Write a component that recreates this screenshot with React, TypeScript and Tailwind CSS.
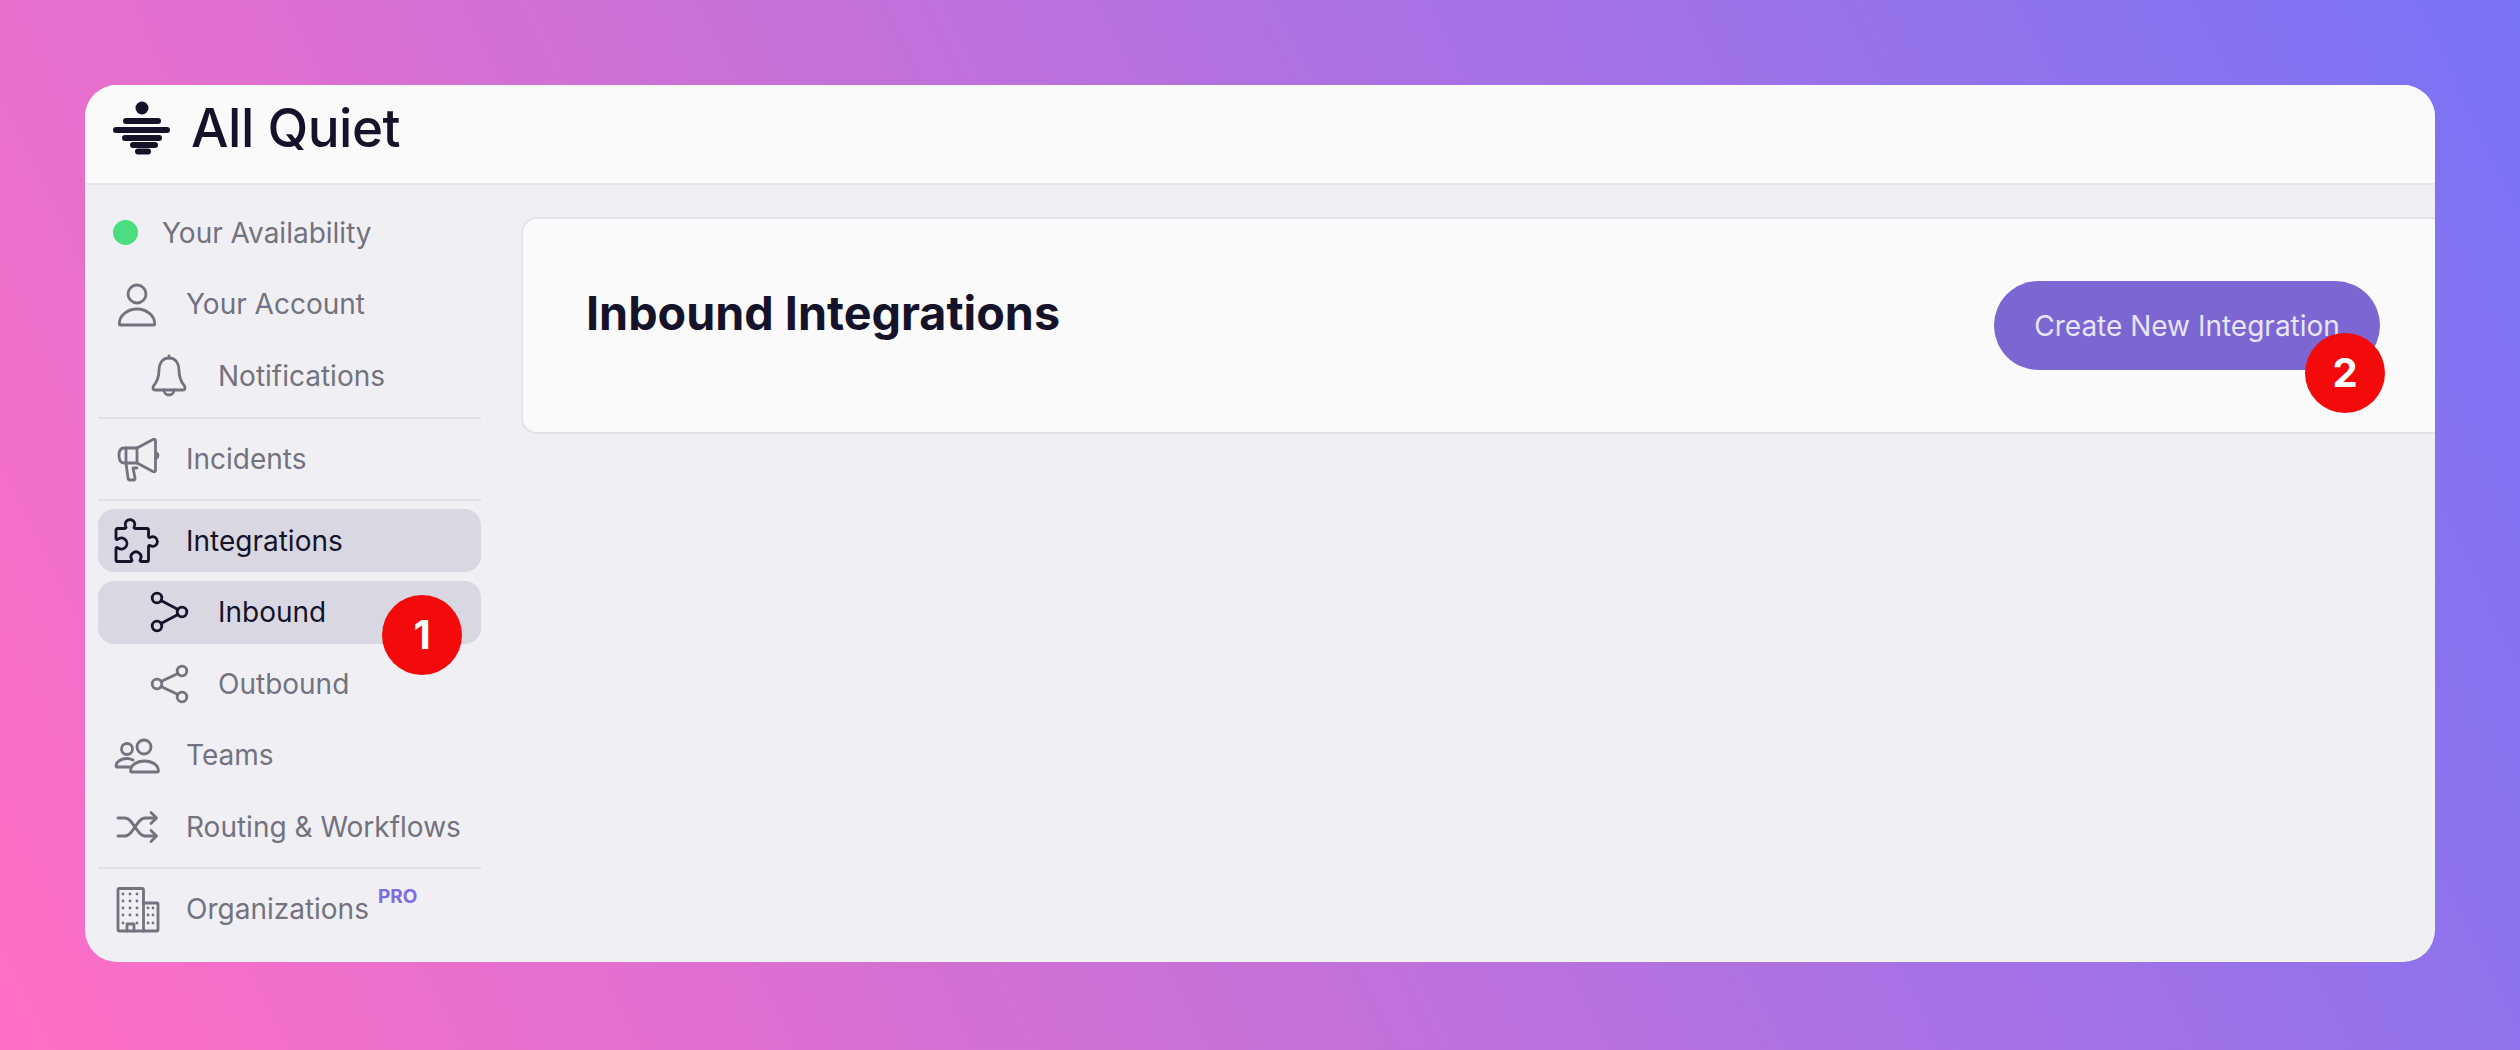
import type { ReactNode } from "react";

const Stroke = ({ children, size = 48 }: { children: ReactNode; size?: number }) => (
  <svg
    width={size}
    height={size}
    viewBox="0 0 48 48"
    fill="none"
    stroke="currentColor"
    strokeWidth="2.8"
    strokeLinecap="round"
    strokeLinejoin="round"
    className="shrink-0"
  >
    {children}
  </svg>
);

const UserIcon = () => (
  <Stroke>
    <circle cx="24" cy="14" r="9" />
    <path d="M7.5 45H40.5a1.2 1.2 0 0 0 1.2-1.2C41.7 35 33 29 24 29S6.3 35 6.3 43.8A1.2 1.2 0 0 0 7.5 45Z" />
  </Stroke>
);

const BellIcon = () => (
  <Stroke>
    <path d="M24 6C17 6 14 12 14 18C14 26 12 30 8.5 34C7.5 36 8 38 10 38H38C40 38 40.5 36 39.5 34C36 30 34 26 34 18C34 12 31 6 24 6Z" />
    <path d="M19 38a5 5 0 0 0 10 0M24 4v2" />
  </Stroke>
);

const MegaphoneIcon = () => (
  <Stroke>
    <path d="M11 13H24L40 4.5C41.5 3.8 42.5 4.5 42.5 6V35C42.5 36.5 41.5 37.2 40 36.5L24 28H11C8 28 6 26 6 20.5S8 13 11 13Z" />
    <path d="M13 13V28M24 13V28M13 28L15 43C15.2 44.3 16 45 17 45H20.5C21.8 45 22.3 44 22 43L20 33H24M43.5 18C45.5 19 45.5 22 43.5 23" />
  </Stroke>
);

const PuzzleIcon = () => (
  <Stroke>
    <path d="M3 13a1.5 1.5 0 0 1 1.5-1.5H11.5c1.5 0 2-1 1.2-2a4.8 4.8 0 1 1 8.6 0c-.8 1-.3 2 1.2 2H34a1.5 1.5 0 0 1 1.5 1.5V19c0 1.5 1 2 2 1.2a4.8 4.8 0 1 1 0 8.6c-1-.8-2-.3-2 1.2V43a1.5 1.5 0 0 1-1.5 1.5H28.5c-1.5 0-2-1-1.2-2a5 5 0 1 0-8.6 0c.8 1 .3 2-1.2 2H4.5A1.5 1.5 0 0 1 3 43V32c0-1.5 1-2 2-1.2a5.5 5.5 0 1 0 0-8.6c-1 .8-2 .3-2-1.2V13Z" />
  </Stroke>
);

const InboundIcon = () => (
  <Stroke>
    <circle cx="12" cy="10" r="4.8" />
    <circle cx="37" cy="24" r="4.8" />
    <circle cx="12" cy="38" r="4.8" />
    <path d="M16 12.5L33 21.5M16 35.5L33 26.5" />
  </Stroke>
);

const OutboundIcon = () => (
  <Stroke>
    <circle cx="37" cy="11" r="4.8" />
    <circle cx="12" cy="24" r="4.8" />
    <circle cx="37" cy="37" r="4.8" />
    <path d="M33 13.5L16 21.5M33 34.5L16 26.5" />
  </Stroke>
);

const TeamsIcon = () => (
  <Stroke>
    <circle cx="31" cy="16" r="7" />
    <circle cx="14" cy="18" r="5.5" />
    <path d="M18.5 41H44.5a1 1 0 0 0 1-1C45.5 34 39 30 31.5 30S17.5 34 17.5 40a1 1 0 0 0 1 1Z" />
    <path d="M17 36H4a1 1 0 0 1-1-1C3 31 8 27.5 14 27.5C16 27.5 18 28 20 29" />
  </Stroke>
);

const ShuffleIcon = () => (
  <Stroke>
    <path d="M5 15H12C20 15 24 33 32 33H43M5 33H12C20 33 24 15 32 15H43" />
    <path d="M38 9.5L43.5 15L38 20.5M38 27.5L43.5 33L38 38.5" />
  </Stroke>
);

const dots = [
  [10, 9], [17, 9], [24, 9],
  [10, 16], [17, 16], [24, 16],
  [10, 23], [17, 23], [24, 23],
  [10, 30], [17, 30], [24, 30],
  [10, 38], [24, 38],
  [35, 23], [40, 23],
  [35, 30], [40, 30],
  [35, 38], [40, 38],
];

const BuildingIcon = () => (
  <Stroke>
    <path d="M5 45V5a1.5 1.5 0 0 1 1.5-1.5H29a1.5 1.5 0 0 1 1.5 1.5V46H6.5A1.5 1.5 0 0 1 5 45Z" />
    <path d="M30.5 18H44a1 1 0 0 1 1 1V45a1 1 0 0 1-1 1H30.5M14 46V39H21V46" />
    {dots.map(([cx, cy]) => (
      <circle key={`${cx}-${cy}`} cx={cx} cy={cy} r="1.4" fill="currentColor" stroke="none" />
    ))}
  </Stroke>
);

const Divider = ({ className }: { className?: string }) => (
  <div className={`h-[2px] bg-[#e1e0e7] ${className ?? ""}`} />
);

const Badge = ({ n, className }: { n: number; className: string }) => (
  <span
    className={`absolute flex h-[80px] w-[80px] items-center justify-center rounded-full bg-[#f30b0b] text-[40px] font-bold text-white ${className}`}
  >
    {n}
  </span>
);

const NavItem = ({
  icon,
  label,
  sub,
  active,
  children,
}: {
  icon: ReactNode;
  label: string;
  sub?: boolean;
  active?: boolean;
  children?: ReactNode;
}) => (
  <div
    className={`relative flex h-[63px] items-center gap-[25px] rounded-[16px] ${sub ? "pl-[47px]" : "pl-[15px]"} ${
      active ? "bg-[#d9d8e2] text-[#15132a]" : "text-[#73727f]"
    }`}
  >
    {icon}
    <span>{label}</span>
    {children}
  </div>
);

export default function App() {
  return (
    <div className="h-[1050px] w-[2520px] overflow-hidden bg-linear-[64deg,#ff6ec4,#7873f5] pb-[88px] pl-[85px] pr-[85px] pt-[85px] font-['Inter',sans-serif]">
      <div className="flex h-full flex-col overflow-hidden rounded-[32px] bg-[#f0eff4]">
        {/* Top bar */}
        <header className="flex h-[100px] shrink-0 items-start gap-[21px] border-b-2 border-[#e6e5eb] bg-[#fafafa] pl-[28px] pt-[15px] text-[#15132a]">
          <svg width="57" height="56" viewBox="0 0 57 56" className="shrink-0" stroke="currentColor" strokeWidth="6" strokeLinecap="round">
            <circle cx="29" cy="8" r="6.5" fill="currentColor" stroke="none" />
            <path d="M13 21H45M3 30H54M12 38H46M20 45H42" />
            <path d="M25 51.5H35" />
          </svg>
          <span className="mt-[-4px] text-[53px] font-medium leading-[64px] tracking-[-0.5px]">All Quiet</span>
        </header>

        <div className="flex min-h-0 flex-1">
          {/* Sidebar */}
          <nav className="ml-[13px] flex w-[383px] shrink-0 flex-col gap-[8.5px] pt-[16px] text-[28px]">
            <div className="flex h-[63px] items-center gap-[24px] pl-[15px] text-[#73727f]">
              <span className="h-[25px] w-[25px] rounded-full bg-[#4ade80]" />
              <span>Your Availability</span>
            </div>
            <NavItem icon={<UserIcon />} label="Your Account" />
            <NavItem icon={<BellIcon />} label="Notifications" sub />
            <Divider className="mt-[1px]" />
            <NavItem icon={<MegaphoneIcon />} label="Incidents" />
            <Divider />
            <NavItem icon={<PuzzleIcon />} label="Integrations" active />
            <NavItem icon={<InboundIcon />} label="Inbound" sub active>
              <Badge n={1} className="left-[284px] top-[14px] z-10" />
            </NavItem>
            <NavItem icon={<OutboundIcon />} label="Outbound" sub />
            <NavItem icon={<TeamsIcon />} label="Teams" />
            <NavItem icon={<ShuffleIcon />} label="Routing & Workflows" />
            <Divider />
            <NavItem icon={<BuildingIcon />} label="Organizations">
              <sup className="ml-[-16px] mt-[-5px] text-[19px] font-bold text-[#7f6ce0]">PRO</sup>
            </NavItem>
          </nav>

          {/* Main */}
          <main className="ml-[40px] min-w-0 flex-1 pt-[32px]">
            <section className="flex h-[217px] w-[2000px] items-start rounded-[16px] border-2 border-[#e4e3e9] bg-[#fafafa] pl-[63px] pt-[66px]">
              <h1 className="text-[46.7px] font-bold leading-[56px] text-[#15132a]">Inbound Integrations</h1>
              <button className="relative ml-[934px] mt-[-4px] flex h-[89px] w-[386px] items-center justify-center rounded-full bg-[#7c66d2] text-[28px] text-[#e8e4fa]">
                Create New Integration
                <Badge n={2} className="left-[311px] top-[52px]" />
              </button>
            </section>
          </main>
        </div>
      </div>
    </div>
  );
}
